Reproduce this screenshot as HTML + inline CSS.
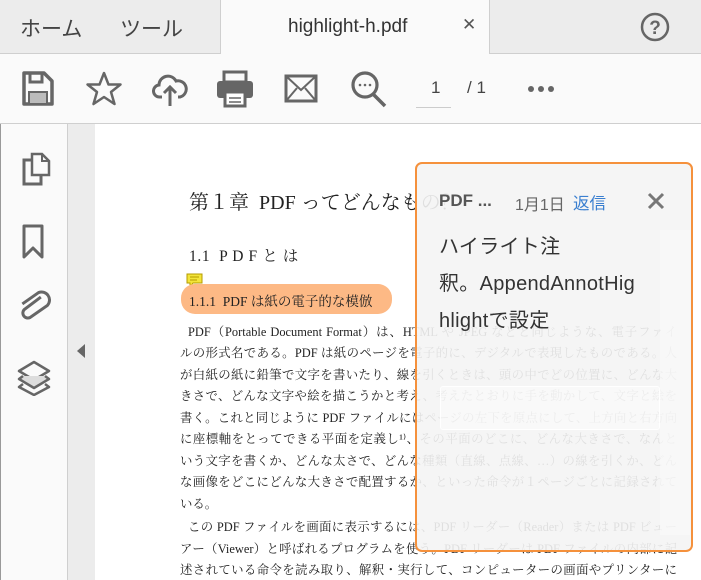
<!DOCTYPE html>
<html><head><meta charset="utf-8"><style>
*{margin:0;padding:0;box-sizing:border-box}
body{width:701px;height:580px;overflow:hidden;background:#fff;font-family:"Liberation Sans","Noto Sans CJK JP",sans-serif;position:relative}
.tabbar{position:absolute;left:0;top:0;width:701px;height:54px;background:#ececec;border-bottom:1px solid #cfcfcf}
.tab{position:absolute;top:13px;font-size:21px;color:#444}
.active{position:absolute;left:220px;top:0;width:270px;height:54px;background:#fafafa;border-left:1px solid #cfcfcf;border-right:1px solid #cfcfcf}
.toolbar{position:absolute;left:0;top:54px;width:701px;height:70px;background:#fafafa;border-bottom:1px solid #cfcfcf}
.side{position:absolute;left:0;top:124px;width:68px;height:456px;background:#fafafa;border-right:1px solid #cfcfcf;border-left:1px solid #999}
.strip{position:absolute;left:68px;top:124px;width:27px;height:456px;background:#ececec}
.doc{position:absolute;font-family:"Liberation Serif","Noto Serif CJK SC",serif;color:#222;white-space:nowrap}
.p{position:absolute;left:180px;width:497px;font-family:"Liberation Serif","Noto Serif CJK SC",serif;font-size:12.4px;color:#222;white-space:nowrap;overflow:hidden;text-align:justify;text-align-last:justify}
.pop{position:absolute;left:415px;top:162px;width:278px;height:390px;border:2px solid #f5913c;border-radius:7px;background:rgba(244,244,244,0.9)}
svg{position:absolute}
</style></head><body>
<div class="tabbar">
<div class="active"></div>
<div class="tab" style="left:20px">ホーム</div>
<div class="tab" style="left:120px">ツール</div>
<div class="tab" style="left:288px;top:16px;font-size:19px;color:#333">highlight-h.pdf</div>
<div class="tab" style="left:462px;top:15px;font-size:17px;color:#555">✕</div>
<svg style="left:639px;top:11px" width="32" height="32"><circle cx="16" cy="16" r="13" fill="none" stroke="#666" stroke-width="2.5"/><text x="16" y="23" font-size="19" font-weight="bold" text-anchor="middle" fill="#666" font-family="Liberation Sans">?</text></svg>
</div>
<div class="toolbar">
<svg style="left:22px;top:17px" width="32" height="36"><path d="M2 2H22L30 10V33H2Z" fill="none" stroke="#666" stroke-width="3.5" stroke-linejoin="round"/><rect x="8" y="2" width="12" height="9" fill="none" stroke="#666" stroke-width="3"/><rect x="7" y="21" width="18" height="12" fill="#bbb" stroke="#666" stroke-width="2"/></svg>
<svg style="left:85px;top:17px" width="38" height="36"><path d="M19 2L23.5 13.5H35.5L26 21L29.5 33L19 26L8.5 33L12 21L2.5 13.5H14.5Z" fill="none" stroke="#666" stroke-width="2.5" stroke-linejoin="round"/></svg>
<svg style="left:152px;top:16px" width="36" height="38"><path d="M10 27H8A6 6 0 0 1 7 15A9 9 0 0 1 24 11A7 7 0 0 1 28 27H26" fill="none" stroke="#666" stroke-width="3"/><path d="M18 36V17M12 23L18 17L24 23" fill="none" stroke="#666" stroke-width="3"/></svg>
<svg style="left:216px;top:16px" width="38" height="38"><rect x="8" y="2" width="22" height="10" fill="none" stroke="#666" stroke-width="3"/><rect x="1" y="11" width="36" height="17" rx="3" fill="#666"/><rect x="9" y="22" width="20" height="14" fill="#fff" stroke="#666" stroke-width="3"/><path d="M13 28H25M13 32H25" stroke="#666" stroke-width="1.5"/></svg>
<svg style="left:284px;top:20px" width="34" height="30"><rect x="2" y="2" width="30" height="25" fill="none" stroke="#666" stroke-width="3"/><path d="M2 2L17 16L32 2M2 27L13 14M32 27L21 14" fill="none" stroke="#666" stroke-width="2"/></svg>
<svg style="left:350px;top:16px" width="40" height="40"><circle cx="15" cy="15" r="12" fill="none" stroke="#666" stroke-width="3.2"/><path d="M23 24L35 36" stroke="#666" stroke-width="3.5"/><circle cx="10" cy="15" r="1.3" fill="#666"/><circle cx="15" cy="15" r="1.3" fill="#666"/><circle cx="20" cy="15" r="1.3" fill="#666"/></svg>
<div style="position:absolute;left:431px;top:24px;font-size:17px;color:#444">1</div>
<div style="position:absolute;left:416px;top:53px;width:35px;border-top:1px solid #ccc"></div>
<div style="position:absolute;left:467px;top:24px;font-size:17px;color:#444">/ 1</div>
<svg style="left:527px;top:30px" width="30" height="10"><circle cx="4" cy="5" r="3" fill="#666"/><circle cx="14" cy="5" r="3" fill="#666"/><circle cx="24" cy="5" r="3" fill="#666"/></svg>
</div>
<div class="side">
<svg style="left:19px;top:28px" width="32" height="34"><path d="M12 2H22L29 9V23H12Z" fill="none" stroke="#666" stroke-width="2.5"/><path d="M22 2V9H29" fill="none" stroke="#666" stroke-width="2"/><path d="M12 8H4V32H21V23" fill="none" stroke="#666" stroke-width="3"/></svg>
<svg style="left:21px;top:100px" width="24" height="36"><path d="M2 2H20V33L11 24L2 33Z" fill="none" stroke="#666" stroke-width="3" stroke-linejoin="round"/></svg>
<svg style="left:16px;top:166px" width="34" height="36"><path d="M22 6L8 21A5 5 0 0 0 15 28L30 13A8 8 0 0 0 19 2L5 16" fill="none" stroke="#666" stroke-width="3" transform="rotate(10 17 17)"/></svg>
<svg style="left:16px;top:236px" width="34" height="36"><path d="M17 2L32 11L17 20L2 11Z" fill="#fafafa" stroke="#666" stroke-width="2.5" stroke-linejoin="round"/><path d="M6 16L2 19L17 28L32 19L28 16" fill="#ddd" stroke="#666" stroke-width="2.5" stroke-linejoin="round"/><path d="M6 24L2 27L17 35L32 27L28 24" fill="none" stroke="#666" stroke-width="2.5" stroke-linejoin="round"/></svg>
</div>
<div class="strip"><svg style="left:8px;top:219px" width="10" height="16"><path d="M9 1V15L1 8Z" fill="#666"/></svg></div>

<div class="doc" style="left:189px;top:186px;font-size:20px">第１章&nbsp; PDF ってどんなもの？</div>
<div class="doc" style="left:189px;top:244px;font-size:15.5px;letter-spacing:0.6px">1.1&nbsp; P D F と は</div>
<svg style="left:186px;top:273px" width="18" height="16"><path d="M1 1H16V10H7L4 14V10H1Z" fill="#f3e53a" stroke="#b59b00" stroke-width="1"/><path d="M4 4H13M4 7H11" stroke="#b59b00" stroke-width="1"/></svg>
<div style="position:absolute;left:181px;top:284px;width:211px;height:30px;background:#fdb985;border-radius:14px"></div>
<div class="doc" style="left:189px;top:290px;font-size:13.5px">1.1.1&nbsp; PDF は紙の電子的な模倣</div>
<div class="p" style="top:322px;left:188px;width:489px">PDF（Portable Document Format）は、HTML や JPEG などと同じような、電子ファイ</div>
<div class="p" style="top:343px">ルの形式名である。PDF は紙のページを電子的に、デジタルで表現したものである。人</div>
<div class="p" style="top:365px">が白紙の紙に鉛筆で文字を書いたり、線を引くときは、頭の中でどの位置に、どんな大</div>
<div class="p" style="top:386px">きさで、どんな文字や絵を描こうかと考え、考えたとおりに手を動かして、文字と絵を</div>
<div class="p" style="top:408px">書く。これと同じように PDF ファイルにはページの左下を原点にして、上方向と右方向</div>
<div class="p" style="top:429px">に座標軸をとってできる平面を定義し¹⁾、その平面のどこに、どんな大きさで、なんと</div>
<div class="p" style="top:451px">いう文字を書くか、どんな太さで、どんな種類（直線、点線、…）の線を引くか、どん</div>
<div class="p" style="top:472px">な画像をどこにどんな大きさで配置するか、といった命令が１ページごとに記録されて</div>
<div class="p" style="top:494px;text-align-last:left">いる。</div>
<div class="p" style="top:517px;left:188px;width:489px">この PDF ファイルを画面に表示するには、PDF リーダー（Reader）または PDF ビュー</div>
<div class="p" style="top:539px">アー（Viewer）と呼ばれるプログラムを使う。PDF リーダーは PDF ファイルの内部に記</div>
<div class="p" style="top:560px">述されている命令を読み取り、解釈・実行して、コンピューターの画面やプリンターに</div>

<div class="pop">
<div style="position:absolute;left:243px;top:66px;width:30px;height:305px;background:rgba(250,250,250,0.6)"></div>
<div style="position:absolute;left:23px;top:222px;width:220px;height:44px;border:1px solid rgba(255,255,255,0.9);background:rgba(255,255,255,0.4);border-radius:3px"></div>
<div style="position:absolute;left:22px;top:27px;font-size:17px;font-weight:bold;color:#555">PDF ...</div>
<div style="position:absolute;left:98px;top:27px;font-size:16px;color:#666">1月1日</div>
<div style="position:absolute;left:156px;top:26px;font-size:16.5px;color:#3a7fd0">返信</div>
<svg style="left:230px;top:28px" width="18" height="18"><path d="M2 2L16 16M16 2L2 16" stroke="#777" stroke-width="3"/></svg>
<div style="position:absolute;left:22px;top:65px;font-size:20px;line-height:37px;color:#333;letter-spacing:0.3px">ハイライト注<br>釈。AppendAnnotHig<br>hlightで設定</div>
</div>
</body></html>
